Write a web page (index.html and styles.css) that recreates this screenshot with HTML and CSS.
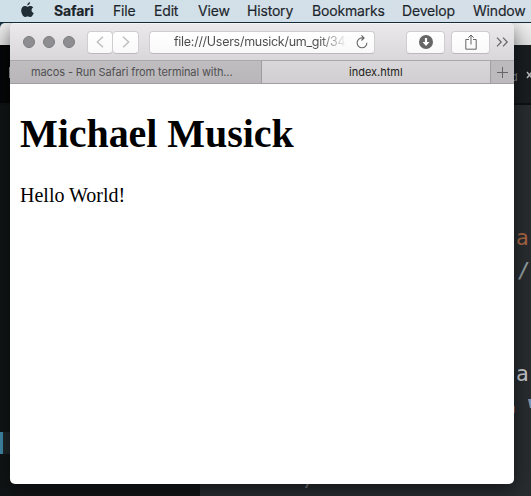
FILE: index.html
```html
<!DOCTYPE html>
<html lang="en">
<head>
<meta charset="utf-8">
<title>index.html</title>
<link rel="stylesheet" href="styles.css">
</head>
<body>
<nav class="menubar">
  <svg class="apple" viewBox="0 0 14 17"><path d="M9.8 0C9.9 1.7 8.5 3.5 6.8 3.6 6.5 2 8.100 .3 9.800 0Z M7 4.900C7.800 4.900 8.700 4.100 10.100 4.100 11.500 4.100 12.600 4.800 13.200 5.700 10.500 7.300 10.900 10.600 13.700 11.700 12.900 13.900 11.500 16 10.100 16 9 16 8.500 15.400 7.200 15.400 5.900 15.400 5.300 16 4.300 16 2.300 16 .2 12.200 .2 9.100 .2 6 2 4.200 4.100 4.200 5.400 4.200 6.200 4.900 7 4.900Z"/></svg>
  <span class="item app">Safari</span><span class="item file">File</span><span class="item edit">Edit</span><span class="item view">View</span><span class="item history">History</span><span class="item bookmarks">Bookmarks</span><span class="item develop">Develop</span><span class="item last">Window</span>
</nav>
<main class="desktop">
  <div class="editor">
    <div class="editor-title"></div>
    <div class="editor-tabs"></div>
    <div class="editor-body"><div class="sidebar"><div class="selected"></div></div><div class="code"></div></div>
    <span class="frag tab-letter">d</span><svg class="frag tab-close" viewBox="0 0 7 8"><path d="M1 1l5 6M6 1L1 7"/></svg>
    <span class="frag tag-a">a</span><span class="frag slash">/</span><span class="frag text-a">a</span><span class="frag quote"></span><span class="frag orange"></span><span class="frag low-slash">/</span><span class="frag side-letter"></span>
  </div>
  <section class="window">
    <header class="toolbar">
      <div class="lights"><i></i><i></i><i></i></div>
      <div class="nav">
        <span><svg width="8" height="12" viewBox="0 0 8 12"><path d="M7 .7L1.300 6 7 11.300"/></svg></span>
        <span><svg width="8" height="12" viewBox="0 0 8 12"><path d="M1 .7L6.700 6 1 11.300"/></svg></span>
      </div>
      <div class="address"><span class="url">file:///Users/musick/um_git/341</span>
        <svg class="reload" width="14" height="14" viewBox="0 0 14 14"><path d="M8.800 2.900H7A4.900 4.900 0 1 0 11.900 7.800M6.400 .4l2.700 2.500-2.700 2.600"/></svg>
      </div>
      <div class="button download"><svg width="14" height="14" viewBox="0 0 14 14"><circle cx="7" cy="7" r="7" fill="#666"/><path d="M5.900 3h2.200v4h2.400L7 10.900 3.500 7h2.400z" fill="#fff"/></svg></div>
      <div class="button"><svg width="12" height="16" viewBox="0 0 12 16"><path d="M4 5.500H.8v9.700h10.400V5.500H8M6 10.500V1M3.300 3.700L6 1l2.700 2.700" fill="none" stroke="#666"/></svg></div>
      <svg class="more" width="13" height="10" viewBox="0 0 13 10"><path d="M1 .7L5.200 5 1 9.300M7 .7L11.200 5 7 9.300"/></svg>
    </header>
    <div class="tabs">
      <div class="tab idle"><span class="idle-label">macos - Run Safari from terminal with...</span></div>
      <div class="tab active"><span class="active-label">index.html</span></div>
      <div class="add"><svg width="11" height="11" viewBox="0 0 11 11"><path d="M5.500 0v11M0 5.500h11"/></svg></div>
    </div>
    <article class="page"><h1>Michael Musick</h1><p>Hello World!</p></article>
  </section>
</main>
</body>
</html>
```

FILE: styles.css
```css
* { box-sizing: border-box; }
body { margin: 0; width: 531px; height: 496px; overflow: hidden; font-family: Inter, "Liberation Sans", sans-serif; background: #1d1f21; }
svg { display: block; }
.menubar { height: 23px; display: flex; background: linear-gradient(90deg, #d0e0e8, #d5dfe8); border-bottom: 1px solid #142c3a; color: #1c252b; font-size: 14px; line-height: 22px; white-space: nowrap; padding-left: 21px; -webkit-text-stroke: .15px; }
.apple { width: 13px; height: 16px; margin: 2px 20px 0 0; fill: #222e35; flex: none; }
.item { flex: none; letter-spacing: -.18px; }
.app { width: 59px; font-weight: 700; letter-spacing: -.1px; }
.file { width: 41px; }
.edit { width: 44px; }
.view { width: 49px; }
.history { width: 65px; }
.bookmarks { width: 90px; }
.develop { width: 71px; }
.desktop { position: relative; height: 473px; overflow: hidden; background: #1b394b; }
.editor { height: 473px; display: flex; flex-direction: column; border-top-left-radius: 5px; overflow: hidden; }
.editor-title { height: 22px; background: linear-gradient(#f0f0f0, #dedede); }
.editor-tabs { height: 60px; background: linear-gradient(90deg, #050607 50%, #191d20 95%); border-bottom: 2px solid #0e1113; }
.editor-body { flex: 1; display: flex; }
.sidebar { width: 200px; background: #111416; padding-top: 327px; }
.selected { height: 22px; background: #1e2629; border-left: 3px solid #3f87a5; }
.code { flex: 1; background: #282c2f; }
.frag { position: absolute; font-family: "DejaVu Sans Mono", monospace; line-height: 20px; }
.tab-letter { left: 511px; top: 44px; font: 11px/20px Inter, sans-serif; color: #777b7e; }
.tab-close { left: 526px; top: 48px; width: 7px; height: 8px; fill: none; stroke: #bbb; stroke-width: 1.5; }
.tag-a { left: 516px; top: 205px; font-size: 21px; color: #a86543; }
.slash { left: 517px; top: 238px; font-size: 22px; color: #929ca1; }
.text-a { left: 516px; top: 341px; font-size: 21px; color: #c3c7cc; }
.quote { left: 529px; top: 376px; width: 3px; height: 9px; background: #7896b8; transform: skewX(12deg); }
.orange { left: 513px; top: 383px; width: 2px; height: 7px; background: #90583c; }
.low-slash { left: 304px; top: 446px; font-size: 20px; color: #777; }
.side-letter { left: 9px; top: 44px; width: 2px; height: 11px; background: #999; }
.window { position: absolute; left: 10px; top: 0; width: 504px; height: 461px; display: flex; flex-direction: column; overflow: hidden; background: #fff; border-radius: 5px; box-shadow: 0 5px 18px rgba(0,0,0,.5); }
.toolbar { height: 37px; display: flex; align-items: center; background: linear-gradient(#ebe9eb, #d9d7d9); border-top: 1px solid #f5f5f5; padding-left: 13px; flex: none; }
.lights { display: flex; gap: 8px; width: 64px; }
.lights i { width: 12px; height: 12px; border-radius: 50%; background: #8e8d91; border: 1px solid #7c7b7e; }
.nav { display: flex; margin-right: 10px; }
.nav span, .button, .address { height: 23px; background: linear-gradient(#fff, #f9f9f9); border: 1px solid #cfcdcf; border-bottom-color: #bbb9bb; border-radius: 4px; display: flex; align-items: center; justify-content: center; }
.nav span { width: 26px; }
.nav span + span { border-left: 0; }
.nav path { fill: none; stroke: #bdbdbd; stroke-width: 1.4; }
.address { position: relative; width: 226px; margin-right: 31px; justify-content: flex-start; padding-left: 24px; }
.url { width: 173px; white-space: nowrap; font-size: 12.500px; line-height: 20px; letter-spacing: -.28px; color: transparent; background: linear-gradient(90deg, #4b4b4b 84%, #4b4b4b00 100%); background-clip: text; -webkit-background-clip: text; }
.reload { margin-left: 8px; fill: none; stroke: #666; stroke-width: 1.1; flex: none; }
.button { width: 39px; margin-right: 6px; }
.more { fill: none; stroke: #666; stroke-width: 1.2; }
.tabs { height: 24px; display: flex; border-top: 1px solid #aaa8aa; border-bottom: 1px solid #a09fa1; font-size: 11px; line-height: 23px; white-space: nowrap; flex: none; }
.idle { width: 252px; background: linear-gradient(#bfbdc0, #b8b6b8); border-right: 1px solid #9d9b9d; color: #505052; padding-left: 21px; letter-spacing: -.11px; }
.active { width: 228px; background: linear-gradient(#d9d7d9, #d0ced0); color: #1e1e20; padding-left: 87px; }
.add { width: 24px; background: #bcbabd; border-left: 1px solid #a09ea0; display: flex; align-items: center; justify-content: center; }
.add path { stroke: #666; }
.page { padding: 27px 10px; font-family: "Liberation Serif", serif; color: #000; }
h1 { margin: 0; font-size: 40px; line-height: 46px; letter-spacing: -.05px; }
p { margin: 27px 0 0; font-size: 20px; line-height: 23px; }
```
